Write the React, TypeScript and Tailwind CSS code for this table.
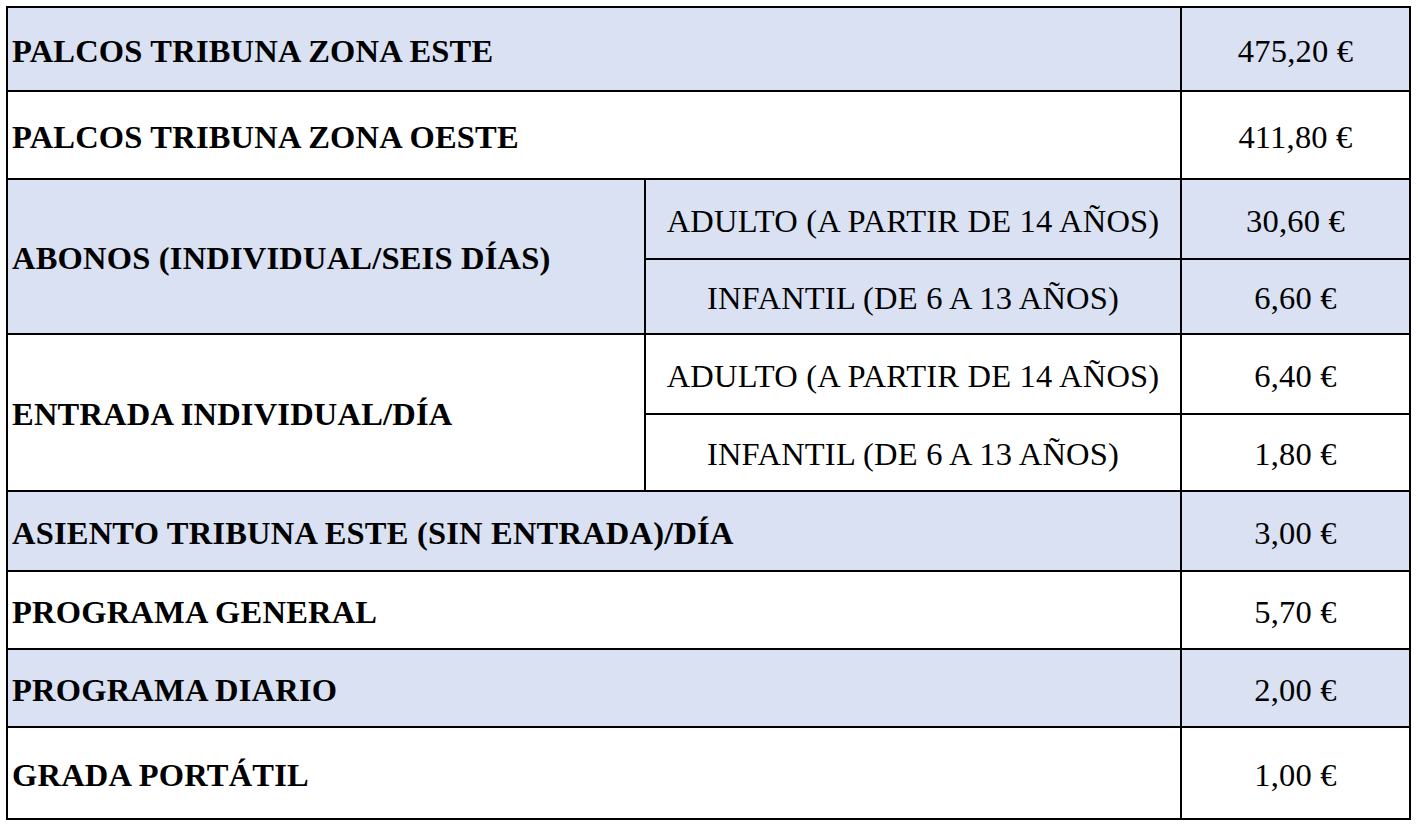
import React from 'react';

type Row = {
  label: string;
  price?: string;
  blue: boolean;
  subs?: { label: string; price: string }[];
};

const ROWS: Row[] = [
  { label: 'PALCOS TRIBUNA ZONA ESTE', price: '475,20 €', blue: true },
  { label: 'PALCOS TRIBUNA ZONA OESTE', price: '411,80 €', blue: false },
  {
    label: 'ABONOS (INDIVIDUAL/SEIS DÍAS)',
    blue: true,
    subs: [
      { label: 'ADULTO (A PARTIR DE 14 AÑOS)', price: '30,60 €' },
      { label: 'INFANTIL (DE 6 A 13 AÑOS)', price: '6,60 €' },
    ],
  },
  {
    label: 'ENTRADA INDIVIDUAL/DÍA',
    blue: false,
    subs: [
      { label: 'ADULTO (A PARTIR DE 14 AÑOS)', price: '6,40 €' },
      { label: 'INFANTIL (DE 6 A 13 AÑOS)', price: '1,80 €' },
    ],
  },
  { label: 'ASIENTO TRIBUNA ESTE (SIN ENTRADA)/DÍA', price: '3,00 €', blue: true },
  { label: 'PROGRAMA GENERAL', price: '5,70 €', blue: false },
  { label: 'PROGRAMA DIARIO', price: '2,00 €', blue: true },
  { label: 'GRADA PORTÁTIL', price: '1,00 €', blue: false },
];

const cell = 'border-r-2 border-b-2 border-black flex items-center pt-[4px]';

export default function App() {
  return (
    <div className="min-h-screen bg-white pt-[6px] pl-[6px] text-black font-['Liberation_Serif',serif]">
      <div className="grid w-[1405px] grid-cols-[638px_536px_229px] grid-rows-[84px_88px_80px_75px_80px_77px_80px_78px_78px_92px] border-l-2 border-t-2 border-black text-[32.5px] tracking-[0.2px]">
        {ROWS.map((row) => {
          const bg = row.blue ? 'bg-[#d9e1f2]' : 'bg-white';
          if (row.subs) {
            return (
              <React.Fragment key={row.label}>
                <div className={`${cell} ${bg} row-span-2 pl-[4px] font-bold`}>{row.label}</div>
                {row.subs.map((s) => (
                  <React.Fragment key={s.label}>
                    <div className={`${cell} ${bg} justify-center`}>{s.label}</div>
                    <div className={`${cell} ${bg} justify-center`}>{s.price}</div>
                  </React.Fragment>
                ))}
              </React.Fragment>
            );
          }
          return (
            <React.Fragment key={row.label}>
              <div className={`${cell} ${bg} col-span-2 pl-[4px] font-bold`}>{row.label}</div>
              <div className={`${cell} ${bg} justify-center`}>{row.price}</div>
            </React.Fragment>
          );
        })}
      </div>
    </div>
  );
}
